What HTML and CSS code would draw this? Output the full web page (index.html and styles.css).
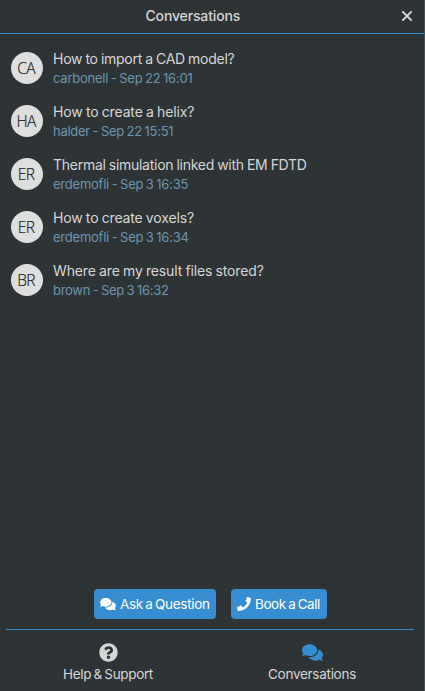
FILE: index.html
```html
<!DOCTYPE html>
<html lang="en">
<head>
<meta charset="utf-8">
<title>Conversations</title>
<link rel="stylesheet" href="styles.css">
</head>
<body>
<svg class="sprite" aria-hidden="true">
  <symbol id="comments" viewBox="0 0 576 512"><path d="M416 192c0-88.400-93.100-160-208-160S0 103.600 0 192c0 34.300 14.100 65.900 38 92-13.400 30.200-35.500 54.200-35.800 54.500-2.200 2.300-2.800 5.700-1.500 8.700S4.800 352 8 352c36.600 0 66.900-12.300 88.700-25 32.200 15.700 70.300 25 111.300 25 114.900 0 208-71.600 208-160zm122 220c23.900-26 38-57.700 38-92 0-66.900-53.500-124.200-129.300-148.100.9 6.600 1.300 13.300 1.300 20.100 0 105.900-107.700 192-240 192-10.800 0-21.300-.8-31.700-1.900C207.800 439.600 281.800 480 368 480c41 0 79.100-9.200 111.300-25 21.800 12.700 52.100 25 88.700 25 3.200 0 6.100-1.900 7.300-4.800 1.300-2.900.7-6.300-1.500-8.700-.3-.3-22.400-24.200-35.800-54.500z"/></symbol>
  <symbol id="phone" viewBox="0 0 512 512"><path d="M493.400 24.600l-104-24c-11.300-2.600-22.900 3.300-27.500 13.900l-48 112c-4.200 9.800-1.400 21.300 6.900 28l60.600 49.600c-36 76.700-98.900 140.500-177.200 177.200l-49.600-60.600c-6.800-8.300-18.200-11.100-28-6.900l-112 48C3.900 366.500-2 378.100.6 389.400l24 104C27.100 504.200 36.700 512 48 512c256.100 0 464-207.500 464-464 0-11.200-7.700-20.900-18.600-23.400z"/></symbol>
  <symbol id="question" viewBox="0 0 512 512"><path d="M504 256c0 137-111 248-248 248S8 393 8 256 119 8 256 8s248 111 248 248zM262.700 90c-54.500 0-89.300 23-116.500 63.800-3.500 5.300-2.400 12.400 2.700 16.300l34.700 26.300c5.200 3.900 12.600 3 16.700-2.100 17.900-22.700 30.100-35.800 57.300-35.800 20.400 0 45.700 13.100 45.700 33 0 15-12.400 22.700-32.500 34C247.100 238.500 216 254.900 216 296v4c0 6.600 5.400 12 12 12h56c6.600 0 12-5.400 12-12v-1.300c0-28.500 83.200-29.600 83.200-106.700 0-58-60.200-102-116.500-102zM256 338c-25.400 0-46 20.600-46 46s20.600 46 46 46 46-20.600 46-46-20.600-46-46-46z"/></symbol>
</svg>
<div class="panel">
  <header class="header">
    <h1 class="heading">Conversations</h1>
    <svg class="close" viewBox="0 0 12 12"><path d="M1.300 1.300l9.400 9.400M10.700 1.300l-9.400 9.400"/></svg>
  </header>
  <main class="list">
    <article class="item"><div class="avatar">CA</div><div class="body"><div class="title t1">How to import a CAD model?</div><div class="meta m1">carbonell - Sep 22 16:01</div></div></article>
    <article class="item"><div class="avatar">HA</div><div class="body"><div class="title t2">How to create a helix?</div><div class="meta m2">halder - Sep 22 15:51</div></div></article>
    <article class="item"><div class="avatar">ER</div><div class="body"><div class="title t3">Thermal simulation linked with EM FDTD</div><div class="meta m3">erdemofli - Sep 3 16:35</div></div></article>
    <article class="item"><div class="avatar">ER</div><div class="body"><div class="title t4">How to create voxels?</div><div class="meta m4">erdemofli - Sep 3 16:34</div></div></article>
    <article class="item"><div class="avatar">BR</div><div class="body"><div class="title t5">Where are my result files stored?</div><div class="meta m5">brown - Sep 3 16:32</div></div></article>
  </main>
  <div class="actions">
    <div class="button ask"><svg class="ask-icon"><use href="#comments"/></svg><span>Ask a Question</span></div>
    <div class="button book"><svg class="book-icon"><use href="#phone"/></svg><span>Book a Call</span></div>
  </div>
  <nav class="tabs">
    <div class="tab"><svg class="help-icon"><use href="#question"/></svg><span class="help-label">Help &amp; Support</span></div>
    <div class="tab"><svg class="talk-icon"><use href="#comments"/></svg><span class="talk-label">Conversations</span></div>
  </nav>
</div>
</body>
</html>
```

FILE: styles.css
```css
* { box-sizing: border-box; }
body { margin: 0; background: #2e3436; color: #d6d6d6; font: 14px/20px Inter, sans-serif; }
.sprite { display: none; }
.panel { height: 691px; display: flex; flex-direction: column; border-right: 1px solid #485153; }
.header { height: 34px; flex: none; display: grid; grid-template-columns: 1fr 24px; padding-right: 5px; border-bottom: 1px solid #368dd1; }
.heading { margin: 0; padding: 6px 0 0 145.5px; font-size: 14px; line-height: 20px; font-weight: 500; letter-spacing: -0.15px; }
.close { width: 12px; height: 12px; margin: 10px 0 0 6px; fill: none; stroke: #dedede; stroke-width: 1.8; }
.list { flex: 1; padding: 15px 0 0 11px; }
.item { height: 53px; display: flex; gap: 10px; }
.avatar { width: 32px; height: 32px; margin-top: 3px; padding-right: 2px; border-radius: 50%; background: #dedede; color: #222; font: 300 15.5px/32px "Open Sans", sans-serif; -webkit-text-stroke: 0.2px #222; text-align: center; letter-spacing: -0.7px; }
.body { white-space: nowrap; }
.title { height: 20px; }
.t1 { letter-spacing: -0.26px; word-spacing: -0.5px; }
.t2 { letter-spacing: -0.14px; word-spacing: -0.5px; }
.t3 { letter-spacing: -0.27px; word-spacing: -0.5px; }
.t4 { letter-spacing: -0.15px; word-spacing: -0.5px; }
.t5 { letter-spacing: -0.14px; word-spacing: -0.5px; }
.meta { height: 18px; color: #6c94b0; font-size: 13px; line-height: 18px; word-spacing: -0.8px; }
.m1 { letter-spacing: -0.23px; }
.m2 { letter-spacing: -0.26px; }
.m3, .m4 { letter-spacing: -0.23px; }
.m5 { letter-spacing: -0.28px; }
.actions { height: 40px; flex: none; display: flex; gap: 15px; padding-left: 94px; }
.button { height: 30px; border-radius: 4px; background: #368dd1; color: #fff; display: flex; align-items: center; white-space: nowrap; padding-left: 6px; gap: 4px; font-size: 13.5px; word-spacing: -1px; }
.button svg { fill: #fff; flex: none; }
.ask { width: 122px; letter-spacing: -0.32px; }
.book { width: 96px; letter-spacing: -0.42px; }
.ask-icon { width: 16px; height: 14px; }
.book-icon { width: 14px; height: 14px; }
.tabs { height: 62px; flex: none; margin: 0 10px 0 6px; border-top: 1px solid #368dd1; display: grid; grid-template-columns: 1fr 1fr; }
.tab { display: flex; flex-direction: column; align-items: center; padding-top: 13px; gap: 2px; white-space: nowrap; font-size: 13.5px; }
.help-icon { width: 19px; height: 19px; margin-left: 1px; fill: #d6d6d6; }
.talk-icon { width: 21px; height: 19px; margin-left: 1px; fill: #368dd1; }
.help-label { letter-spacing: -0.35px; word-spacing: -1px; }
.talk-label { letter-spacing: -0.28px; }
```
